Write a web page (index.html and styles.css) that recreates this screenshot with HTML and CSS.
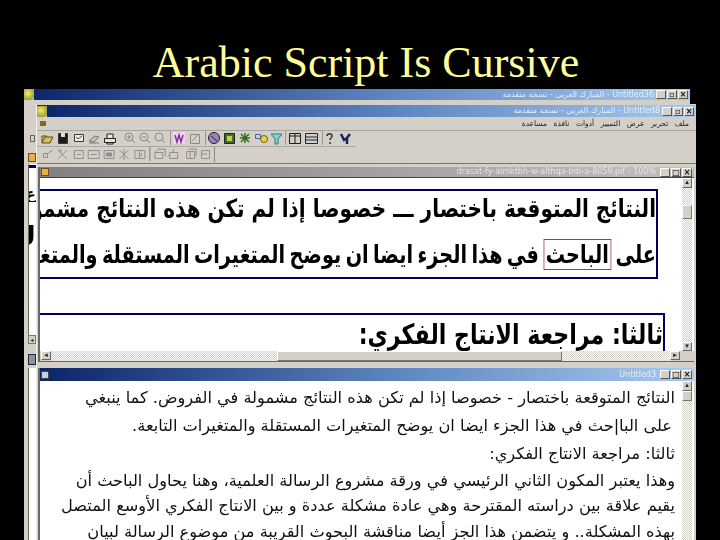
FILE: index.html
```html
<!DOCTYPE html>
<html lang="en">
<head>
<meta charset="utf-8">
<title>Arabic Script Is Cursive</title>
<link rel="stylesheet" href="styles.css">
</head>
<body>
<div class="slide">
  <h1 class="title">Arabic Script Is Cursive</h1>

  <div class="win win-back">
    <div class="tbar active">
      <span class="app-ico"></span>
      <span class="tbar-text">المبارك العربي - نسخة متقدمة - Untitled36</span>
      <span class="btns"><i class="b">_</i><i class="b">▫</i><i class="b">×</i></span>
    </div>
    <div class="back-strip">
      <span class="stub"><span class="stub-ico"></span></span>
      <span class="side-title"><span class="side-ico"></span></span>
      <span class="side-white">
        <span class="side-bar"></span>
        <b class="g1" dir="rtl">ع</b>
        <b class="g2" dir="rtl">ك</b>
      </span>
      <span class="side-arrow">◂</span>
      <span class="side-title2"><span class="side-ico2"></span></span>
      <span class="side-white2"></span>
    </div>
  </div>

  <div class="win win-main">
    <div class="tbar active">
      <span class="app-ico"></span>
      <span class="tbar-text">المبارك العربي - نسخة متقدمة - Untitled8</span>
      <span class="btns"><i class="b">_</i><i class="b">▫</i><i class="b">×</i></span>
    </div>
    <div class="menu">
      <span class="menu-ico"></span>
      <div class="menu-items" dir="rtl">
        <span>ملف</span><span>تحرير</span><span>عرض</span><span>التمييز</span><span>أدوات</span><span>نافذة</span><span>مساعدة</span>
      </div>
    </div>
    <div class="tool-row">
      <svg class="tools" width="317" height="15" viewBox="0 0 317 15" fill="none" stroke="#3a3a38" stroke-width="1">
        <path d="M3 12l3-6h8l-3 6zM3 12V5h5" stroke="#5a4c18" fill="#d8c060"/>
        <path d="M19.5 2.5h9v10h-9z" fill="#1c1c1c"/><path d="M22 2h4v4h-4z" fill="#e0e0d8" stroke="none"/>
        <path d="M35.5 3.5h9v7h-9z" fill="#ecebdc"/><path d="M37 6l2 2 4-3" stroke="#5a5a20"/>
        <path d="M50 10l6-5 4 1-5 5zM50 12h10" stroke="#777" fill="#c4c0b8"/>
        <path d="M65.5 7.5h11v4h-11zM68 7V3h6v4M68 11v2h6v-2" stroke="#222" fill="#e8e6dc"/>
        <g stroke="#8a8a86"><circle cx="90" cy="6" r="4"/><path d="M93 9l3 3M88 6h4M90 4v4"/><circle cx="105" cy="6" r="4"/><path d="M108 9l3 3M103 6h4"/><circle cx="120" cy="6" r="4"/><path d="M123 9l3 3"/></g>
        <path d="M131.500 0v14" stroke="#9a9890"/>
        <path d="M134 1h12v12h-12z" fill="#f0d4f0" stroke="none"/>
        <path d="M136 4l2 7 2-7 2 7 2-7" stroke="#8030a0" stroke-width="1.500"/>
        <path d="M151.500 3.500h9v9h-9zM153 10l7-7" stroke="#8a8a86"/>
        <path d="M166.500 0v14" stroke="#9a9890"/>
        <circle cx="175" cy="7" r="5.500" fill="#a080c0" stroke="#222"/><path d="M172 5l6 5" stroke="#222"/>
        <path d="M185.500 2.500h10v10h-10z" fill="#2c7a2c" stroke="#222"/><path d="M188 5h5v5h-5z" fill="#e8c040" stroke="none"/>
        <path d="M201 7h10M206 2v10M202 3l8 8M210 3l-8 8" stroke="#3a6a20" stroke-width="1.500"/>
        <path d="M216.500 3.500h5v4h-5z" stroke="#5060b0"/><circle cx="225" cy="8" r="3.500" stroke="#706010" fill="#e8d040"/>
        <path d="M232 3h11l-4 5v5h-3V8z" stroke="#208080" fill="#90d0c8"/>
        <path d="M246.500 0v14" stroke="#9a9890"/>
        <path d="M250.500 2.500h11v10h-11zM256 3v10M250 5h11" stroke="#1c1c1c"/>
        <path d="M266.500 2.500h12v10h-12zM266 6h12M266 9h12" stroke="#162858"/>
        <path d="M283.500 0v14" stroke="#9a9890"/>
        <path d="M288 5c0-3 5-3 5 0 0 2-2 2-2 4M291 11v2" stroke="#333" stroke-width="1.500"/>
        <path d="M302 3l3 6 3-2v6M311 3l-4 5" stroke="#18245c" stroke-width="2.500"/>
      </svg>
    </div>
    <div class="tool-row2">
      <svg width="176" height="15" viewBox="0 0 176 15" fill="none" stroke="#8e8e8a">
        <path d="M4.500 6.500h4v4h-4zM9 6l5-3"/><path d="M19 3l9 9M28 3l-9 9M19 3h3v3"/>
        <path d="M35.500 3.500h9v8h-9zM38 7.500h4"/><path d="M49.500 3.500h11v8h-11zM52 7.500h6"/>
        <path d="M65.500 3.500h10v8h-10z"/><path d="M68 6h5v3h-5z" fill="#8e8e8a"/>
        <path d="M81 3l9 9M90 3l-9 9M85.500 2v11"/><path d="M96.500 3.500h10v8h-10zM101 3v9M103 6v3"/>
        <path d="M111.500 0v14" stroke="#777"/>
        <path d="M116.500 5.500h8v6h-8zM117 5l3-3h7v7"/><path d="M131.500 5.500h8v6h-8zM131 8l-2 2M135 2v3"/>
        <path d="M148.500 4.500h8v7h-8zM152 4v8M150 2h8v7"/><path d="M163.500 3.500h8v8h-8zM163 7h6"/>
      </svg>
    </div>
    <div class="mdi">
      <div class="docs">
        <div class="doc doc-top">
          <div class="tbar inactive">
            <span class="doc-ico"></span>
            <span class="tbar-text small">drasat-fy-almktbh-w-althqa-bdr-a-8059.pif - 100%</span>
            <span class="btns"><i class="b">_</i><i class="b">□</i><i class="b">×</i></span>
          </div>
          <div class="doc-body">
            <div class="pane">
              <div class="scan">
                <div class="box box-a">
                  <p dir="rtl">النتائج المتوقعة باختصار ـــ خصوصا إذا لم تكن هذه النتائج مشمولة في الفروض</p>
                  <p dir="rtl" class="line-two">على <span class="mark">الباحث</span> في هذا الجزء ايضا ان يوضح المتغيرات المستقلة والمتغيرات التابعة</p>
                </div>
                <div class="box box-b">
                  <p dir="rtl">ثالثا: مراجعة الانتاج الفكري:</p>
                </div>
              </div>
              <div class="vscroll">
                <span class="arr">▴</span><span class="thumb thumb-a"></span><span class="track"></span><span class="arr">▾</span>
              </div>
            </div>
            <div class="hscroll">
              <span class="arr">◂</span><span class="track htrack"></span><span class="hthumb"></span><span class="track htrack2"></span><span class="arr">▸</span><span class="grip"></span>
            </div>
          </div>
        </div>
        <div class="doc doc-bottom">
          <div class="tbar active">
            <span class="doc-ico doc-ico2"></span>
            <span class="tbar-text small">Untitled3</span>
            <span class="btns"><i class="b">_</i><i class="b">□</i><i class="b">×</i></span>
          </div>
          <div class="pane">
            <div class="rich" dir="rtl">
              <p>النتائج المتوقعة باختصار - خصوصا إذا لم تكن هذه النتائج مشمولة في الفروض. كما ينبغي</p>
              <p class="in">على البا|حث في هذا الجزء ايضا ان يوضح المتغيرات المستقلة والمتغيرات التابعة.</p>
              <p>ثالثا: مراجعة الانتاج الفكري:</p>
              <p class="tight">وهذا يعتبر المكون الثاني الرئيسي في ورقة مشروع الرسالة العلمية، وهنا يحاول الباحث أن</p>
              <p class="tight">يقيم علاقة بين دراسته المقترحة وهي عادة مشكلة عددة و بين الانتاج الفكري الأوسع المتصل</p>
              <p class="last">بهذه المشكلة.. و يتضمن هذا الجز أيضا مناقشة البحوث القريبة من موضوع الرسالة لبيان</p>
            </div>
            <div class="vscroll vscroll-low">
              <span class="arr">▴</span><span class="thumb thumb-b"></span><span class="track"></span>
            </div>
          </div>
        </div>
      </div>
    </div>
  </div>
</div>
</body>
</html>
```

FILE: styles.css
```css
* { box-sizing: border-box; }
html, body { margin: 0; padding: 0; background: #000; }
.slide { position: relative; width: 720px; height: 540px; overflow: hidden; background: #000; }
.title {
  margin: 0; padding: 38px 0 0 12px; text-align: center; height: 89px;
  font: 400 44px/50px "Liberation Serif", serif; color: #ffff99;
}
.win { position: absolute; background: #d4d0c8; overflow: hidden; filter: blur(.3px); }
.win-back { left: 24px; top: 89px; width: 666px; height: 451px; }
.win-main { left: 36px; top: 104px; width: 660px; height: 436px; display: flex; flex-direction: column; padding-top: 1px; border-left: 1px solid #f2f0ea; }

.tbar { display: flex; align-items: center; height: 12px; flex: none; color: #e6eef8; }
.win-back > .tbar { height: 11px; }
.active { background: linear-gradient(90deg, #0a2468, #5f86c0 55%, #a6caf0); }
.inactive { background: linear-gradient(90deg, #808080, #c0c0c0); color: #e4e4e4; }
.app-ico { width: 10px; height: 11px; background: radial-gradient(circle at 40% 40%, #f4f060, #a0a040 70%, #d8d8b0); flex: none; }
.tbar-text { flex: 1; min-width: 0; text-align: right; padding-right: 2px; font: 8px/12px "DejaVu Sans", sans-serif; white-space: nowrap; overflow: hidden; }
.tbar-text.small { padding-right: 4px; }
.btns { display: flex; gap: 1px; margin-right: 2px; flex: none; }
.b { display: block; width: 10px; height: 9px; background: #d4d0c8; color: #111; font: 700 8px/7px "DejaVu Sans", sans-serif; font-style: normal; text-align: center; border: 1px solid; border-color: #fff #555 #555 #fff; overflow: hidden; }

.back-strip { display: flex; flex-direction: column; width: 12px; height: 440px; padding-top: 31px; }
.stub { display: flex; justify-content: flex-end; align-items: center; height: 15px; flex: none; padding-right: 1px; }
.stub-ico { width: 5px; height: 7px; border: 1px solid #666; }
.side-title { display: flex; justify-content: flex-end; align-items: center; height: 14px; flex: none; margin-top: 4px; }
.side-ico { width: 8px; height: 9px; background: #e8b040; border: 1px solid #6a5020; }
.side-white { display: flex; flex-direction: column; align-items: flex-end; height: 171px; flex: none; margin-left: 4px; background: #fff; overflow: hidden; border-left: 1px solid #666; }
.side-bar { width: 100%; height: 3px; flex: none; margin-top: 1px; background: #00005c; }
.g1, .g2 { color: #000; font-family: "DejaVu Sans", sans-serif; font-weight: 700; flex: none; width: 7px; overflow: hidden; }
.g1 { margin-top: 18px; font-size: 16px; line-height: 16px; }
.g2 { margin-top: 20px; font-size: 26px; line-height: 28px; }
.side-arrow { height: 9px; flex: none; width: 8px; margin-left: 4px; background: #d4d0c8; border: 1px solid #777; font: 6px/7px "DejaVu Sans", sans-serif; text-align: center; color: #222; }
.side-title2 { display: flex; justify-content: flex-end; align-items: center; height: 17px; flex: none; margin-top: 7px; background: #d4d0c8; }
.side-ico2 { width: 8px; height: 11px; background: #8a94a8; border: 1px solid #223; }
.side-white2 { flex: 1; margin-left: 4px; background: #fff; border-left: 1px solid #666; }

.menu { display: flex; align-items: center; justify-content: space-between; height: 14px; flex: none; border-bottom: 1px solid #a8a59e; padding: 0 7px 0 3px; }
.menu-ico { width: 6px; height: 5px; background: #7c6a30; }
.menu-items { display: flex; gap: 6.5px; font: 7.5px/13px "DejaVu Sans", sans-serif; color: #222; }
.tool-row { height: 16px; width: 319px; flex: none; padding-left: 2px; border-bottom: 1px solid #aaa8a0; }
.tools { display: block; }
.tool-row2 { height: 17px; flex: none; padding-left: 2px; border-bottom: 1px solid #77756e; }
.tool-row2 svg { display: block; border-right: 1px solid #888; }

.mdi { flex: 1; display: flex; min-height: 0; margin-top: 3px; padding-left: 1px; }
.docs { flex: 1; min-width: 0; display: flex; flex-direction: column; margin-right: 2px; }
.doc { border-left: 2px solid #6a6a66; }
.doc-top { height: 195px; flex: none; display: flex; flex-direction: column; border-bottom: 1px solid #666; margin-bottom: 6px; }
.doc-bottom { flex: 1; min-height: 0; display: flex; flex-direction: column; }
.doc-ico { width: 8px; height: 8px; margin-left: 1px; background: #e8b040; border: 1px solid #6a5020; flex: none; }
.doc-ico2 { background: #c8d0d8; border-color: #445; }
.doc-top .tbar { height: 11px; border-bottom: 1px solid #444; }
.doc-bottom .tbar { height: 13px; }
.doc-body { flex: 1; min-height: 0; display: flex; flex-direction: column; }
.pane { flex: 1; min-height: 0; display: flex; background: #fff; }

.scan { flex: 1; min-width: 0; overflow: hidden; padding-top: 11px; padding-right: 24px; }
.box { border: 2px solid #00005c; border-left: 0; overflow: hidden; white-space: nowrap; }
.box p { margin: 0; color: #000; transform-origin: right center; }
.box-a { height: 90px; }
.box-a p { font: 700 25px/36px "DejaVu Sans", sans-serif; transform: scaleX(.8); }
.box-a p + p { margin-top: 10px; }
.box-a .line-two { transform: scaleX(.77); word-spacing: -3px; }
.box-b { height: 60px; margin-top: 34px; margin-right: -7px; border-bottom: 0; }
.box-b p { font: 700 28px/40px "DejaVu Sans", sans-serif; transform: scaleX(.79); }
.mark { border: 1px solid #904040; padding: 0 2px; background: #fff; }

.vscroll { width: 10px; flex: none; margin-right: 2px; display: flex; flex-direction: column; background: repeating-conic-gradient(#d4d0c8 0 25%, #fff 0 50%) 0 0 / 2px 2px; }
.arr { display: block; height: 9px; width: 10px; flex: none; background: #d4d0c8; color: #222; font: 7px/7px "DejaVu Sans", sans-serif; text-align: center; border: 1px solid; border-color: #fff #666 #666 #fff; }
.vscroll > .arr:first-child { height: 10px; }
.thumb { display: block; width: 10px; flex: none; background: #d4d0c8; border: 1px solid; border-color: #fff #777 #777 #fff; }
.thumb-a { height: 14px; margin-top: 17px; }
.thumb-b { height: 10px; }
.track { display: block; flex: 1; }

.hscroll { height: 10px; flex: none; display: flex; background: #d4d0c8; padding-left: 1px; }
.hscroll .htrack { flex: none; width: 226px; background: repeating-conic-gradient(#d4d0c8 0 25%, #fff 0 50%) 0 0 / 2px 2px; }
.hscroll .htrack2 { flex: none; width: 108px; background: repeating-conic-gradient(#d4d0c8 0 25%, #fff 0 50%) 0 0 / 2px 2px; }
.hthumb { flex: 1; background: #d4d0c8; border: 1px solid; border-color: #fff #777 #777 #fff; }
.grip { width: 14px; flex: none; background: #d4d0c8; }

.rich { flex: 1; min-width: 0; overflow: hidden; padding: 3px 7px 0 0; }
.rich p { margin: 0; font: 16.2px/28px "DejaVu Sans", sans-serif; color: #111; white-space: nowrap; }
.rich .in { padding-right: 3px; }
.rich .tight { line-height: 25px; }
.rich .last { line-height: 27px; }
```
